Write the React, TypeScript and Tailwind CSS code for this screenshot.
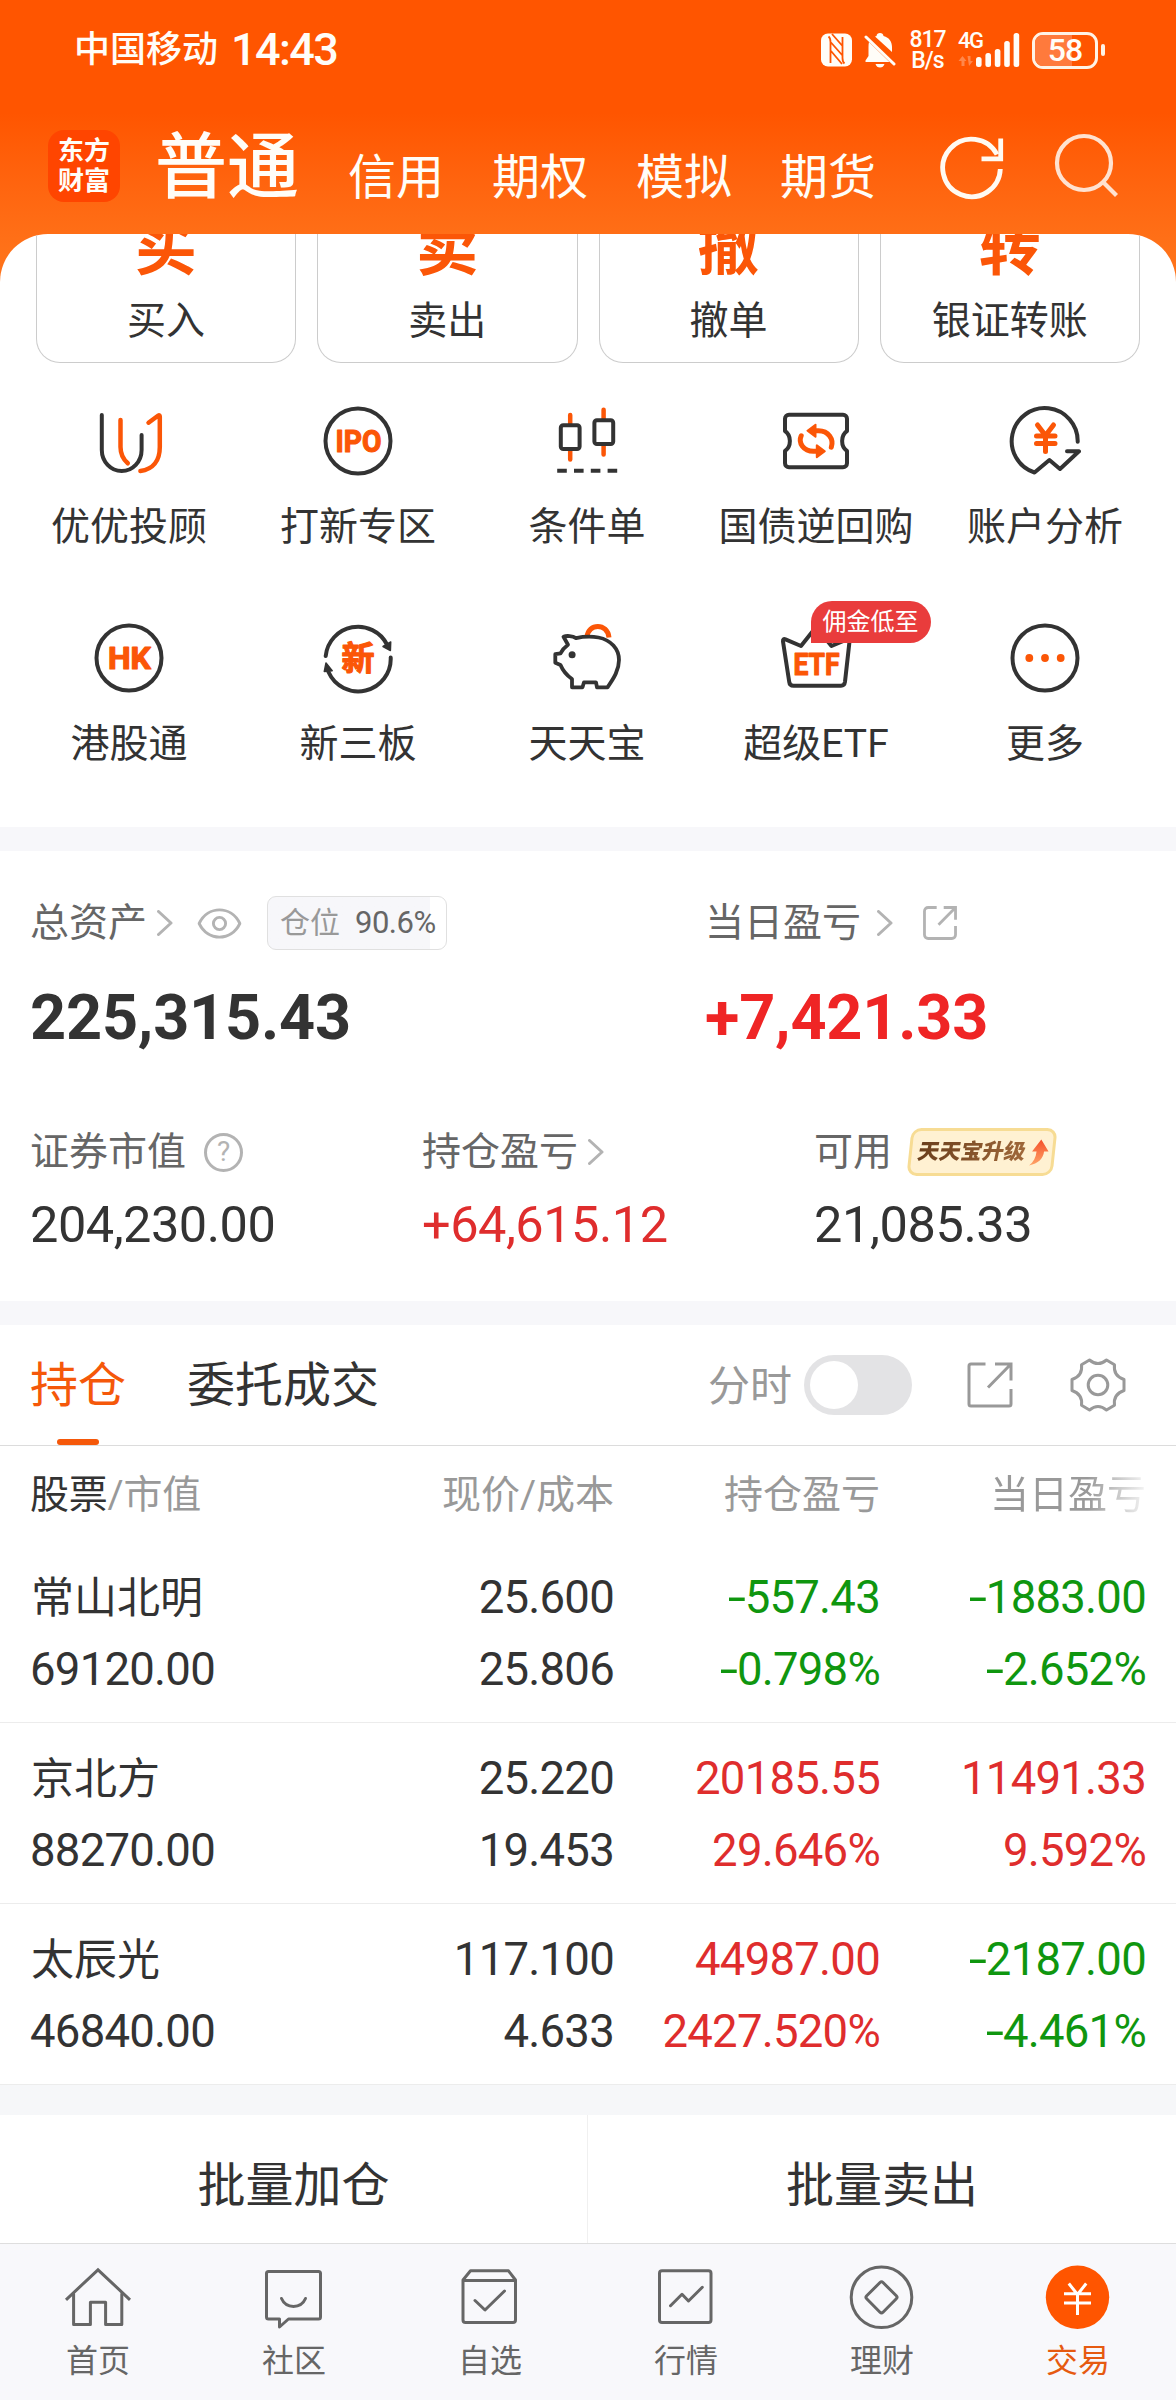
import React from 'react';

const DARK = '#333333';
const ORANGE = '#fb5607';

interface Shortcut {
  label: string;
  icon: React.ReactNode;
  badge?: string;
}

interface Holding {
  name: string;
  value: string;
  price: string;
  cost: string;
  profit: string;
  profitRate: string;
  day: string;
  dayRate: string;
}

const Icon: React.FC<{ children: React.ReactNode; color?: string; width?: number }> = ({
  children,
  color = DARK,
  width = 4,
}) => (
  <svg
    width="72"
    height="72"
    viewBox="0 0 72 72"
    fill="none"
    stroke={color}
    strokeWidth={width}
    strokeLinecap="round"
    strokeLinejoin="round"
  >
    {children}
  </svg>
);

const IconText: React.FC<{ x: number; y: number; w: number; size?: number; children: string }> = ({
  x,
  y,
  w,
  size = 31,
  children,
}) => (
  <text
    x={x}
    y={y}
    textLength={w}
    lengthAdjust="spacingAndGlyphs"
    fontSize={size}
    fontWeight="700"
    fill={ORANGE}
    stroke={ORANGE}
    strokeWidth="1.2"
  >
    {children}
  </text>
);

const quickActions = [
  { mark: '买', label: '买入' },
  { mark: '卖', label: '卖出' },
  { mark: '撤', label: '撤单' },
  { mark: '转', label: '银证转账' },
];

const shortcuts: Shortcut[] = [
  {
    label: '优优投顾',
    icon: (
      <Icon>
        <path d="M8.8 10v35a19.9 21 0 0 0 39.8 0V30" />
        <path stroke={ORANGE} strokeWidth="4.5" d="M27.5 15v27c0 7 3 12.5 7.3 16.3M55.5 17.7l9.8-7.2c.9-.6 1.5-.2 1.500.9V42c0 14-7 22.5-19.4 24" />
      </Icon>
    ),
  },
  {
    label: '打新专区',
    icon: (
      <Icon>
        <circle cx="36" cy="36" r="32.5" />
        <IconText x={13.5} y={47} w={46}>IPO</IconText>
      </Icon>
    ),
  },
  {
    label: '条件单',
    icon: (
      <Icon>
        <g stroke={ORANGE} strokeWidth="4.5">
          <path d="M19.2 10v10M19.2 44v10.5M52.6 4.8v10M52.6 39v10.5" />
        </g>
        <rect x="9.8" y="20.3" width="18.8" height="23.7" rx="2.5" fill="white" />
        <rect x="43.4" y="15.3" width="18.8" height="23.7" rx="2.5" fill="white" />
        <path strokeLinecap="butt" strokeDasharray="9.6 7.2" d="M6.2 65.7h61" />
      </Icon>
    ),
  },
  {
    label: '国债逆回购',
    icon: (
      <Icon>
        <path d="M9 9.7h54a4 4 0 0 1 4 4V26c-6.5 4.5-6.5 15.5 0 20v12.300a4 4 0 0 1-4 4H9a4 4 0 0 1-4-4V46c6.5-4.5 6.5-15.5 0-20V13.700a4 4 0 0 1 4-4z" />
        <g stroke={ORANGE} strokeWidth="5">
          <path d="M33 25.7h5.5c10 0 15.5 8.5 12.8 16.5M39 46.3h-5.5c-10 0-15.5-8.5-12.3-15.5" />
          <path strokeWidth="2" fill={ORANGE} d="M27.5 25.7l8-6v12zM44.8 46.3l-8-6v12z" />
        </g>
      </Icon>
    ),
  },
  {
    label: '账户分析',
    icon: (
      <Icon>
        <path d="M68.7 36.7A33 33 0 1 0 25.5 67.5L40.4 55l10.6 9L70 46.300H58" />
        <path stroke={ORANGE} strokeWidth="5" d="M28.5 20l8 10.5 8-10.5M27.5 31H46M27.5 38.500H46M36.5 31v15.5" />
      </Icon>
    ),
  },
  {
    label: '港股通',
    icon: (
      <Icon>
        <circle cx="36" cy="36" r="32.5" />
        <IconText x={15} y={47} w={43}>HK</IconText>
      </Icon>
    ),
  },
  {
    label: '新三板',
    icon: (
      <Icon>
        <path d="M3.7 34A32.5 32.5 0 0 1 65 22.5M68.7 35.5A32.5 32.5 0 0 1 6.5 50" />
        <path fill={DARK} strokeWidth="1.5" d="M61 24.5l7.7-4.5-.3 8.500zM2.3 49.5L4 41l6.2 7.700z" />
        <IconText x={19.5} y={48} w={33} size={33}>新</IconText>
      </Icon>
    ),
  },
  {
    label: '天天宝',
    icon: (
      <Icon width={3.8}>
        <path stroke={ORANGE} strokeWidth="5" strokeLinecap="butt" d="M36 15c1-14 20.5-14.5 22 .5" />
        <path d="M12.5 14.8c3-1.3 9-1 12.5 1.3 6-1.3 16-1.8 22.5-.6C60 18 68 27 68 38c0 10-5 18-11.5 27.300H46l-1-5H33l-1.5 5H21V57c-5-3.5-9-8-11.5-14L4.3 40.700v-8.500l5.2-.8c2-4 4.5-6.5 7.5-8.700z" />
        <circle cx="21.1" cy="32.7" r="3.5" fill={DARK} stroke="none" />
      </Icon>
    ),
  },
  {
    label: '超级ETF',
    badge: '佣金低至',
    icon: (
      <Icon>
        <path d="M3 19.5c-.2-2.2.8-2.8 2.5-2.1L21 24 34.5 7c1-1.3 2-1.3 3 0l14 17L67 17.4c1.7-.7 2.7-.1 2.5 2.1L65 59.7c-.4 2.8-1.5 4-4 4H13.5c-2.5 0-4-1.2-4.3-4z" />
        <IconText x={13.5} y={53} w={46}>ETF</IconText>
      </Icon>
    ),
  },
  {
    label: '更多',
    icon: (
      <Icon>
        <circle cx="36" cy="36" r="32.5" />
        <g fill={ORANGE} stroke="none">
          <circle cx="20.3" cy="36" r="3.9" />
          <circle cx="36" cy="36" r="3.9" />
          <circle cx="51.7" cy="36" r="3.9" />
        </g>
      </Icon>
    ),
  },
];

const holdings: Holding[] = [
  { name: '常山北明', value: '69120.00', price: '25.600', cost: '25.806', profit: '-557.43', profitRate: '-0.798%', day: '-1883.00', dayRate: '-2.652%' },
  { name: '京北方', value: '88270.00', price: '25.220', cost: '19.453', profit: '20185.55', profitRate: '29.646%', day: '11491.33', dayRate: '9.592%' },
  { name: '太辰光', value: '46840.00', price: '117.100', cost: '4.633', profit: '44987.00', profitRate: '2427.520%', day: '-2187.00', dayRate: '-4.461%' },
];

const navItems = [
  {
    label: '首页',
    icon: (
      <Icon color="#666666" width={3}>
        <path strokeLinecap="butt" strokeLinejoin="miter" d="M4 38.8L36 8.8l32 30" />
        <path d="M11.6 33v30.500h16.800V41.300h15.200v22.200h16.200V33" />
      </Icon>
    ),
  },
  {
    label: '社区',
    icon: (
      <Icon color="#666666" width={3}>
        <path d="M10.5 10.500h50a2 2 0 0 1 2 2V56a2 2 0 0 1-2 2h-30l-9 8v-8h-11a2 2 0 0 1-2-2V12.500a2 2 0 0 1 2-2z" />
        <path d="M23.5 37.5c4.5 10.5 19.5 10.5 24 0" />
      </Icon>
    ),
  },
  {
    label: '自选',
    icon: (
      <Icon color="#666666" width={3}>
        <path d="M9 19l7.5-9.200h38L61.5 19v40a2.5 2.5 0 0 1-2.5 2.500H11.500A2.500 2.500 0 0 1 9 59zM9 19.500h52.500M21 39.500l10 9.500 19.500-19" />
      </Icon>
    ),
  },
  {
    label: '行情',
    icon: (
      <Icon color="#666666" width={3}>
        <rect x="9.5" y="9.8" width="51.5" height="51.7" rx="2.5" />
        <path d="M20.5 44.7L32 33.3l6.5 6.7 13.8-13.7" />
      </Icon>
    ),
  },
  {
    label: '理财',
    icon: (
      <Icon color="#666666" width={3}>
        <circle cx="35.5" cy="36.3" r="30.3" />
        <path d="M34 21.500q1.500-1.500 3 0l13.300 13.300q1.500 1.500 0 3L37 51.200q-1.500 1.500-3 0L20.700 37.800q-1.500-1.500 0-3z" />
      </Icon>
    ),
  },
  {
    label: '交易',
    active: true,
    icon: (
      <Icon color="#ffffff" width={3}>
        <circle cx="35.5" cy="36.3" r="31.7" fill="#ff5500" stroke="none" />
        <path strokeLinecap="butt" d="M26.8 22.5l8.7 11 8.7-11M22 32.700h27M22 42h27M35.5 33v21" />
      </Icon>
    ),
  },
];

const Chevron: React.FC<{ className?: string }> = ({ className }) => (
  <svg className={className} width="16" height="26" viewBox="0 0 16 26" fill="none" stroke="#b3b3b3" strokeWidth="3">
    <path d="M1.5 1.5L14 13 1.5 24.5" strokeLinejoin="round" strokeLinecap="round" />
  </svg>
);

const tone = (v: string) => (v.startsWith('-') ? 'text-[#0f960f]' : 'text-[#df2d2d]');

// wide minus sign in front of losses
const Amount: React.FC<{ value: string }> = ({ value }) =>
  value.startsWith('-') ? (
    <span>
      <span className="inline-block origin-right scale-x-[1.45]">-</span>
      {value.slice(1)}
    </span>
  ) : (
    <span>{value}</span>
  );

const StatusBar: React.FC = () => (
  <div className="flex h-[98px] items-center pt-[2px] pr-[71px] pl-[74px] text-[#fffdf8]">
    <span className="text-[36px] leading-[48px] font-medium">中国移动</span>
    <span className="ml-[13px] text-[45px] leading-[48px] font-medium tracking-[-1.6px]">14:43</span>
    <div className="ml-auto flex items-center">
      <svg width="31" height="34" viewBox="0 0 31 34">
        <rect x="0" y="0.5" width="31" height="33" rx="7" fill="#fffdf8" />
        <path fill="none" stroke="#ff5500" strokeWidth="1.8" d="M7.5 3.500Q9.500 5 9.500 9v21M23.500 30.500Q21.500 29 21.500 25V4M11 1l10.500 12M10 9.500l11.500 13M10 18l11 13" />
      </svg>
      <svg className="ml-[12px]" width="32" height="36" viewBox="0 0 32 36" fill="#fffdf8">
        <path d="M16 1c2 0 3.3 1 3.5 3 6 1.5 8.5 6 8.500 11v5L11 4.500c.5-.2 1-.4 1.500-.5C12.700 2 14 1 16 1zM5 10l20.500 20h-24v-1.500l3-4.500v-9c0-1.800.1-3.400.5-5zM11.500 32h9c-.8 2.500-2.300 3.500-4.500 3.500s-3.700-1-4.500-3.500z" />
        <path d="M2 5l28 27" stroke="#fffdf8" strokeWidth="3" strokeLinecap="round" />
      </svg>
      <div className="ml-[13px] flex w-[37px] flex-col items-center text-[23px] leading-[21px] font-medium tracking-[-1px]">
        <span>817</span>
        <span>B/s</span>
      </div>
      <div className="relative ml-[12px] h-[36px] w-[63px]">
        <span className="absolute top-[-1px] left-0 text-[22px] leading-[20px] font-medium tracking-[-1.5px]">4G</span>
        <svg width="63" height="36" viewBox="0 0 63 36" fill="#fffdf8">
          <rect x="18" y="25" width="5.6" height="10" rx="2.5" />
          <rect x="27.4" y="21" width="5.6" height="14" rx="2.5" />
          <rect x="36.8" y="17" width="5.6" height="18" rx="2.5" />
          <rect x="46.2" y="9" width="5.6" height="26" rx="2.5" />
          <rect x="55.6" y="1" width="5.6" height="34" rx="2.5" />
          <path opacity=".3" d="M4.500 24l4 5h-2v5h-3v-5h-3zM9.500 24h3v5H15l-4 5z" />
        </svg>
      </div>
      <div className="relative ml-[11px] flex h-[37px] w-[66px] items-center justify-center overflow-hidden rounded-[11px] border-3 border-[#fff3e6]">
        <div className="absolute inset-y-0 left-0 w-[37px] bg-[#ff7a3c]" />
        <span className="relative text-[32px] leading-[37px] font-medium tracking-[-1px]">58</span>
      </div>
      <div className="ml-[3px] h-[12px] w-[4px] rounded-[2px] bg-[#fff3e6]" />
    </div>
  </div>
);

const Header: React.FC = () => (
  <header className="h-[282px] bg-linear-to-b from-[#ff5500] from-40% to-[#ff7219] to-90%">
    <StatusBar />
    <div className="flex h-[136px] items-center pl-[48px] text-[#fffdf8]">
      <div className="flex h-[72px] w-[72px] flex-col items-center justify-center rounded-[16px] bg-[#ff4500] text-[26px] leading-[30px] font-bold">
        <span>东方</span>
        <span>财富</span>
      </div>
      <span className="ml-[35px] pt-[3px] text-[72px] leading-[80px] font-medium">普通</span>
      <div className="ml-[49px] flex gap-[48px] pt-[24px] text-[48px] leading-[56px]">
        <span>信用</span>
        <span>期权</span>
        <span>模拟</span>
        <span>期货</span>
      </div>
      <svg className="ml-[61px]" width="72" height="72" viewBox="0 0 72 72" fill="none" stroke="#fffaf2" strokeWidth="4.8">
        <path d="M63.3 39a28.8 28.8 0 1 1-3.3-14.5" />
        <path d="M63.7 8.500v20.300H44.500" />
      </svg>
      <svg className="ml-[40px]" width="72" height="72" viewBox="0 0 72 72" fill="none" stroke="#ffe2d0" strokeWidth="4.2">
        <circle cx="35" cy="33" r="27" />
        <path d="M53.5 51.5L67.500 65.500" />
      </svg>
    </div>
  </header>
);

const ExternalIcon: React.FC<{ size: number; color: string; width: number; r: number }> = ({ size, color, width, r }) => (
  <svg width={size} height={size} viewBox="0 0 46 46" fill="none" stroke={color} strokeWidth={width}>
    <path d={`M18.5 2H${2 + r}a${r} ${r} 0 0 0-${r} ${r}V${44 - r}a${r} ${r} 0 0 0 ${r} ${r}H${44 - r}a${r} ${r} 0 0 0 ${r}-${r}V27`} />
    <path d="M28 2h16v16.500M44 2L21 25.500" />
  </svg>
);

const Assets: React.FC = () => (
  <section className="h-[450px] pt-[45px] text-[39px] text-[#666666]">
    <div className="flex pl-[30px]">
      <div className="w-[675px]">
        <div className="flex h-[54px] items-center">
          <span className="leading-[48px]">总资产</span>
          <Chevron className="ml-[10px]" />
          <svg className="ml-[24px]" width="45" height="31" viewBox="0 0 46 32" fill="none" stroke="#b3b3b3" strokeWidth="3">
            <path d="M2 16C11-2.7 35-2.700 44 16 35 34.700 11 34.700 2 16z" strokeLinejoin="round" />
            <circle cx="23" cy="16" r="6.3" />
          </svg>
          <div className="ml-[25px] flex h-[54px] w-[180px] items-center rounded-[9px] border border-[#e0e0e0] bg-linear-to-r from-[#f7f7fa] from-[91%] to-white to-[91%] pl-[12px] text-[30px] leading-[48px]">
            <span className="text-[#999999]">仓位</span>
            <span className="ml-[15px] text-[31px] tracking-[-0.5px]">90.6%</span>
          </div>
        </div>
        <div className="mt-[36px] text-[63px] leading-[64px] font-bold tracking-[-0.2px] text-[#333333]">225,315.43</div>
      </div>
      <div>
        <div className="flex h-[54px] items-center">
          <span className="leading-[48px]">当日盈亏</span>
          <Chevron className="mr-[30px] ml-[16px]" />
          <ExternalIcon size={34} color="#b3b3b3" width={3.8} r={5} />
        </div>
        <div className="mt-[36px] text-[63px] leading-[64px] font-bold tracking-[-0.2px] text-[#ef2525]">+7,421.33</div>
      </div>
    </div>
    <div className="mt-[78px] grid grid-cols-3">
      <div className="pl-[30px]">
        <div className="flex h-[48px] items-center">
          <span className="leading-[48px]">证券市值</span>
          <div className="ml-[18px] flex h-[39px] w-[39px] items-center justify-center rounded-full border-3 border-[#b3b3b3] text-[28px] leading-[32px] text-[#b3b3b3]">
            ?
          </div>
        </div>
        <div className="mt-[19px] text-[50.5px] leading-[60px] tracking-[-0.5px] text-[#333333]">204,230.00</div>
      </div>
      <div className="pl-[30px]">
        <div className="flex h-[48px] items-center">
          <span className="leading-[48px]">持仓盈亏</span>
          <Chevron className="ml-[10px]" />
        </div>
        <div className="mt-[19px] text-[50.5px] leading-[60px] tracking-[-0.5px] text-[#df2d2d]">+64,615.12</div>
      </div>
      <div className="pl-[30px]">
        <div className="flex h-[48px] items-center">
          <span className="leading-[48px]">可用</span>
          <div className="ml-[17px] flex h-[48px] w-[146px] -skew-x-6 items-center rounded-[10px] border-3 border-[#f7dc94] bg-[#fff1d2] pl-[6px]">
            <span className="-skew-x-6 bg-linear-to-r from-[#6b3f1c] to-[#a0683a] bg-clip-text text-[21.5px] leading-[40px] font-black text-transparent">
              天天宝升级
            </span>
            <svg className="ml-[4px]" width="19" height="27" viewBox="0 0 19 26">
              <defs>
                <linearGradient id="rise" x1="0" y1="0" x2="0" y2="1">
                  <stop offset="0" stopColor="#f4502a" />
                  <stop offset="1" stopColor="#ffa468" />
                </linearGradient>
              </defs>
              <path fill="url(#rise)" d="M10 0l8.5 12H14c0 7-4.500 12-13.500 14 4-3.500 6-8 6-14H2z" />
            </svg>
          </div>
        </div>
        <div className="mt-[19px] text-[50.5px] leading-[60px] tracking-[-0.4px] text-[#333333]">21,085.33</div>
      </div>
    </div>
  </section>
);

const Positions: React.FC = () => (
  <section>
    <div className="flex h-[121px] items-center border-b border-[#dcdcdc] pl-[30px] text-[48px] text-[#333333]">
      <div className="relative flex h-full items-center pt-[2px] text-[#f5580a]">
        持仓
        <div className="absolute bottom-0 left-[27px] h-[6px] w-[42px] rounded-full bg-[#f5580a]" />
      </div>
      <span className="ml-[61px] pt-[2px]">委托成交</span>
      <span className="ml-[329px] pt-[2px] text-[42px] text-[#999999]">分时</span>
      <div className="ml-[12px] flex h-[60px] w-[108px] items-center rounded-full bg-[#e3e3e5] pl-[6px]">
        <div className="h-[48px] w-[48px] rounded-full bg-white" />
      </div>
      <div className="ml-[55px]">
        <ExternalIcon size={46} color="#999999" width={3} r={2} />
      </div>
      <svg className="ml-[55px]" width="60" height="60" viewBox="0 0 60 60" fill="none" stroke="#999999" strokeWidth="3" strokeLinejoin="round">
        <path d="M21.5 5q8.500 7 17 0l8 4.700q-1.500 11 9.500 14.800v11q-11 3.800-9.500 14.800l-8 4.700q-8.500-7-17 0l-8-4.700q1.500-11-9.500-14.800v-11q11-3.800 9.500-14.800z" />
        <circle cx="30" cy="30" r="9.8" />
      </svg>
    </div>

    <div className="grid h-[96px] grid-cols-[1fr_280px_266px_266px] items-center pt-[3px] pr-[30px] pl-[30px] text-right text-[39px] text-[#999999]">
      <span className="text-left tracking-[-0.2px]">
        <span className="text-[#333333]">股票</span>/市值
      </span>
      <span>现价/成本</span>
      <span>持仓盈亏</span>
      <span className="bg-linear-to-r from-[#999999] from-78% to-[#999999]/10 bg-clip-text text-transparent">当日盈亏</span>
    </div>

    {holdings.map((h) => (
      <div
        key={h.name}
        className="grid h-[181px] grid-cols-[1fr_280px_266px_266px] border-b border-[#ececec] pt-[20px] pr-[30px] pl-[30px] text-right text-[45.5px] leading-[72px] tracking-[-0.75px] text-[#333333]"
      >
        <div className="flex flex-col text-left">
          <span className="pl-[1px] text-[43px] tracking-normal">{h.name}</span>
          <span>{h.value}</span>
        </div>
        <div className="flex flex-col">
          <span>{h.price}</span>
          <span>{h.cost}</span>
        </div>
        <div className={`flex flex-col ${tone(h.profit)}`}>
          <Amount value={h.profit} />
          <Amount value={h.profitRate} />
        </div>
        <div className={`flex flex-col ${tone(h.day)}`}>
          <Amount value={h.day} />
          <Amount value={h.dayRate} />
        </div>
      </div>
    ))}
  </section>
);

const App: React.FC = () => {
  return (
    <div className="h-[2400px] w-[1176px] overflow-hidden bg-white font-['Roboto','Noto_Sans_CJK_SC',sans-serif] text-[#333333]">
      <Header />

      <main className="relative -mt-[48px] overflow-hidden rounded-t-[48px] bg-white">
        <div className="grid grid-cols-4 gap-[21px] px-[36px]">
          {quickActions.map((a) => (
            <div key={a.label} className="flex h-[129px] flex-col items-center rounded-b-[24px] border border-t-0 border-[#cccccc]">
              <span className="-mt-[16px] text-[62px] leading-[62px] font-bold text-[#fb5607]">{a.mark}</span>
              <span className="mt-[17px] text-[39px] leading-[48px]">{a.label}</span>
            </div>
          ))}
        </div>

        <div className="grid grid-cols-5 gap-y-[71px] pt-[42px] pr-[16.5px] pb-[59px] pl-[14.5px]">
          {shortcuts.map((s) => (
            <div key={s.label} className="relative flex flex-col items-center">
              {s.icon}
              <span className="mt-[26px] text-[39px] leading-[48px]">{s.label}</span>
              {s.badge && (
                <span className="absolute top-[-21px] left-[109px] h-[42px] w-[120px] rounded-[21px] rounded-bl-none bg-[#e93c3c] text-center text-[24px] leading-[42px] text-white">
                  {s.badge}
                </span>
              )}
            </div>
          ))}
        </div>

        <div className="h-[24px] bg-[#f7f7fa]" />
        <Assets />
        <div className="h-[24px] bg-[#f7f7fa]" />
        <Positions />
        <div className="h-[30px] bg-[#f6f7f9]" />

        <div className="grid h-[128px] grid-cols-2 text-center text-[48px] leading-[120px]">
          <span className="border-r border-[#f0f0f0] pt-[11px]">批量加仓</span>
          <span className="pt-[11px]">批量卖出</span>
        </div>
      </main>

      <nav className="grid h-[157px] grid-cols-6 border-t border-[#dedede] bg-[#f8f8fb] pt-[17px]">
        {navItems.map((n) => (
          <div key={n.label} className={`flex flex-col items-center text-[32px] ${n.active ? 'text-[#e65a10]' : 'text-[#666666]'}`}>
            {n.icon}
            <span className="mt-[8px] leading-[40px]">{n.label}</span>
          </div>
        ))}
      </nav>
    </div>
  );
};

export default App;
